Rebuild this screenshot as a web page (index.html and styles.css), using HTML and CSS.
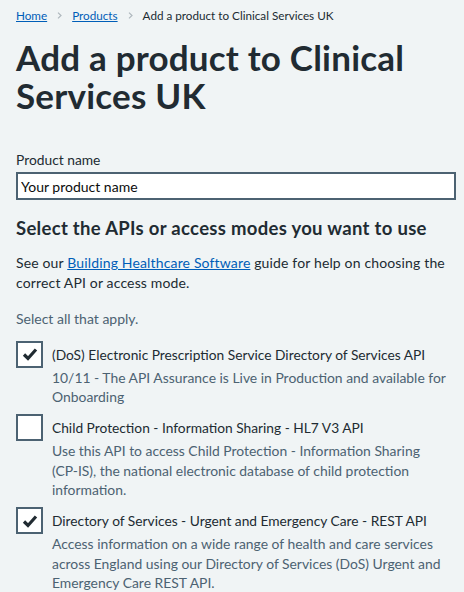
FILE: index.html
```html
<!DOCTYPE html>
<html lang="en">
<head>
<meta charset="utf-8">
<title>Add a product to Clinical Services UK</title>
<link rel="stylesheet" href="styles.css">
</head>
<body>
<div class="page">
  <nav class="breadcrumb">
    <a href="#">Home</a>
    <svg class="chev" viewBox="0 0 5 7" width="5" height="7"><path d="M1 0.6 L4 3.5 L1 6.4" fill="none" stroke="currentColor" stroke-width="1.2"/></svg>
    <a href="#">Products</a>
    <svg class="chev" viewBox="0 0 5 7" width="5" height="7"><path d="M1 0.6 L4 3.5 L1 6.4" fill="none" stroke="currentColor" stroke-width="1.2"/></svg>
    <span>Add a product to Clinical Services UK</span>
  </nav>
  <h1 class="title">Add a product to Clinical Services UK</h1>

  <label class="label" for="pname">Product name</label>
  <input class="input" id="pname" type="text" value="Your product name">

  <h2 class="subtitle">Select the APIs or access modes you want to use</h2>
  <p class="para">See our <a href="#">Building Healthcare Software</a> guide for help on choosing the correct API or access mode.</p>
  <p class="hint-top">Select all that apply.</p>

  <div class="items">
    <div class="item">
      <span class="box"><svg viewBox="0 0 20 20" width="20" height="20"><path d="M4 10.5 L8 14.5 L16 5.5" fill="none" stroke="#212b32" stroke-width="3.2"/></svg></span>
      <div class="text">
        <div class="item-label">(DoS) Electronic Prescription Service Directory of Services API</div>
        <div class="item-hint">10/11 - The API Assurance is Live in Production and available for Onboarding</div>
      </div>
    </div>
    <div class="item">
      <span class="box"></span>
      <div class="text">
        <div class="item-label">Child Protection - Information Sharing - HL7 V3 API</div>
        <div class="item-hint">Use this API to access Child Protection - Information Sharing <span class="nowrap">(CP-IS),</span> the national electronic database of child protection information.</div>
      </div>
    </div>
    <div class="item">
      <span class="box"><svg viewBox="0 0 20 20" width="20" height="20"><path d="M4 10.5 L8 14.5 L16 5.5" fill="none" stroke="#212b32" stroke-width="3.2"/></svg></span>
      <div class="text">
        <div class="item-label">Directory of Services - Urgent and Emergency Care - REST API</div>
        <div class="item-hint">Access information on a wide range of health and care services across England using our Directory of Services (DoS) Urgent and Emergency Care REST API.</div>
      </div>
    </div>
  </div>
</div>
</body>
</html>
```

FILE: styles.css
```css
html, body {
  margin: 0;
  padding: 0;
  background: #f0f4f5;
}
body {
  font-family: Lato, "Open Sans", sans-serif;
  color: #212b32;
}
.page {
  padding: 0 8px 0 16px;
}
.breadcrumb {
  padding-top: 6px;
  font-size: 11.7px;
  line-height: 18px;
  display: flex;
  align-items: center;
  gap: 10px;
  color: #212b32;
}
.breadcrumb a {
  color: #005eb8;
  text-decoration: underline;
}
.breadcrumb .chev {
  color: #aeb7bd;
  margin-top: 1px;
}
.title {
  margin: 13.5px 0 0;
  font-size: 35px;
  line-height: 38px;
  letter-spacing: 0.2px;
  font-weight: 700;
}
.label {
  display: block;
  margin-top: 36.5px;
  font-size: 13.8px;
  line-height: 20px;
}
.input {
  display: block;
  box-sizing: border-box;
  width: 100%;
  height: 28px;
  margin: 2.3px 0 0;
  border: 2px solid #4c6272;
  border-radius: 0;
  background: #fff;
  padding: 0 3px;
  font-family: inherit;
  font-size: 14px;
  color: #0b0c0c;
}
.subtitle {
  margin: 16px 0 0;
  font-size: 18.5px;
  line-height: 24px;
  letter-spacing: 0.3px;
  font-weight: 700;
}
.para {
  margin: 13px 0 0;
  font-size: 14px;
  line-height: 20px;
  letter-spacing: 0.15px;
}
.para a {
  color: #005eb8;
}
.hint-top {
  margin: 15.5px 0 0;
  font-size: 14px;
  line-height: 20px;
  color: #4c6272;
}
.items {
  margin-top: 12px;
  display: flex;
  flex-direction: column;
  gap: 7.5px;
}
.item {
  display: flex;
  gap: 9px;
}
.box {
  flex: none;
  box-sizing: border-box;
  width: 27px;
  height: 27px;
  border: 2px solid #4c6272;
  background: #fff;
  display: flex;
  align-items: center;
  justify-content: center;
}
.text {
  padding-top: 4px;
}
.item-label {
  font-size: 13.75px;
  line-height: 20px;
}
.item-hint {
  margin-top: 3px;
  font-size: 13.9px;
  line-height: 19.5px;
  color: #4c6272;
}
.nowrap {
  white-space: nowrap;
}
```
